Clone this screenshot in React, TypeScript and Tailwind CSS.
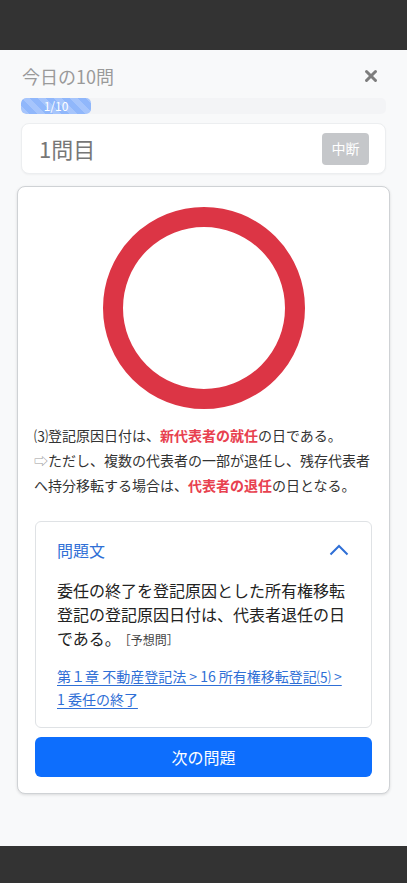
import { X } from 'lucide-react';

const font = { fontFamily: '"Noto Sans CJK JP", "Noto Sans", sans-serif' };

export default function App() {
  return (
    <div className="min-h-[883px] w-[407px] flex flex-col bg-[#f8f9fa]" style={font}>
      {/* 上部バー */}
      <div className="h-[50px] bg-[#333333] shrink-0" />

      <div className="flex-1 flex flex-col">
        {/* ヘッダー */}
        <div className="px-[21px] pt-[14px]">
          <div className="flex items-center justify-between h-[24px]">
            <h1 className="text-[18px] leading-[24px] text-[#9a9a9a] pl-[1px]">今日の10問</h1>
            <X className="w-[18px] h-[18px] text-[#7d7d7d] mr-[6px]" strokeWidth={4} />
          </div>

          {/* 進捗バー */}
          <div className="mt-[10px] h-[16px] rounded-[5px] bg-[#f3f4f6] overflow-hidden">
            <div className="h-full w-[70px] rounded-[5px] flex items-center justify-center text-[12px] leading-none text-white bg-[#90b7fb] bg-[linear-gradient(45deg,rgba(255,255,255,0.2)_25%,transparent_25%,transparent_50%,rgba(255,255,255,0.2)_50%,rgba(255,255,255,0.2)_75%,transparent_75%,transparent)] bg-[length:16px_16px]">
              1/10
            </div>
          </div>

          {/* 問題番号 */}
          <div className="mt-[9px] h-[51px] bg-white rounded-[8px] border border-[#eceef0] shadow-[0_1px_2px_rgba(0,0,0,0.04)] flex items-center justify-between pl-[17px] pr-[16px]">
            <span className="text-[22px] text-[#777777]">1問目</span>
            <button className="w-[47px] h-[32px] rounded-[4px] bg-[#c5c7ca] text-white text-[14px]">中断</button>
          </div>
        </div>

        {/* 解答カード */}
        <div className="mx-[17px] mt-[12px] bg-white rounded-[8px] border border-[#cfd2d5] shadow-[0_1px_3px_rgba(0,0,0,0.12)] p-[16px]">
          <div className="flex justify-center">
            <svg width="210" height="210" viewBox="0 0 210 210">
              <circle cx="105" cy="105" r="91" fill="none" stroke="#dc3545" strokeWidth="20" />
            </svg>
          </div>

          <div className="mt-[10px] text-[14px] leading-[25px] text-[#333333]">
            <p>
              ⑶登記原因日付は、<b className="text-[#e8414f]">新代表者の就任</b>の日である。
            </p>
            <p>
              <span className="text-[#9a9a9a]">⇨</span>ただし、複数の代表者の一部が退任し、残存代表者へ持分移転する場合は、<b className="text-[#e8414f]">代表者の退任</b>の日となる。
            </p>
          </div>

          {/* 問題文 */}
          <div className="mt-[23px] mx-[1px] border border-[#dfe2e5] rounded-[6px] px-[21px] pt-[16px] pb-[16px]">
            <div className="flex items-center justify-between h-[24px]">
              <span className="text-[16px] text-[#2f6fd6]">問題文</span>
              <svg width="20" height="12" viewBox="0 0 20 12" className="mr-[1px]">
                <path d="M1.5 10.5 L10 2 L18.5 10.5" fill="none" stroke="#2f6fd6" strokeWidth="2" />
              </svg>
            </div>
            <p className="mt-[16px] text-[16px] leading-[24px] text-[#222222]">
              委任の終了を登記原因とした所有権移転登記の登記原因日付は、代表者退任の日である。
              <span className="ml-[4px] text-[12px] leading-[24px] text-[#444444]">［予想問］</span>
            </p>
            <a href="#" className="block mt-[13px] text-[14px] leading-[23px] text-[#2f6fd6] underline underline-offset-[3px]">
              第１章 不動産登記法 &gt; 16 所有権移転登記⑸ &gt; 1 委任の終了
            </a>
          </div>

          <button className="mt-[9px] mx-[1px] w-[calc(100%-2px)] h-[40px] rounded-[6px] bg-[#0d6efd] text-white text-[16px]">
            次の問題
          </button>
        </div>
      </div>

      {/* 下部バー */}
      <div className="h-[37px] bg-[#333333] shrink-0" />
    </div>
  );
}
